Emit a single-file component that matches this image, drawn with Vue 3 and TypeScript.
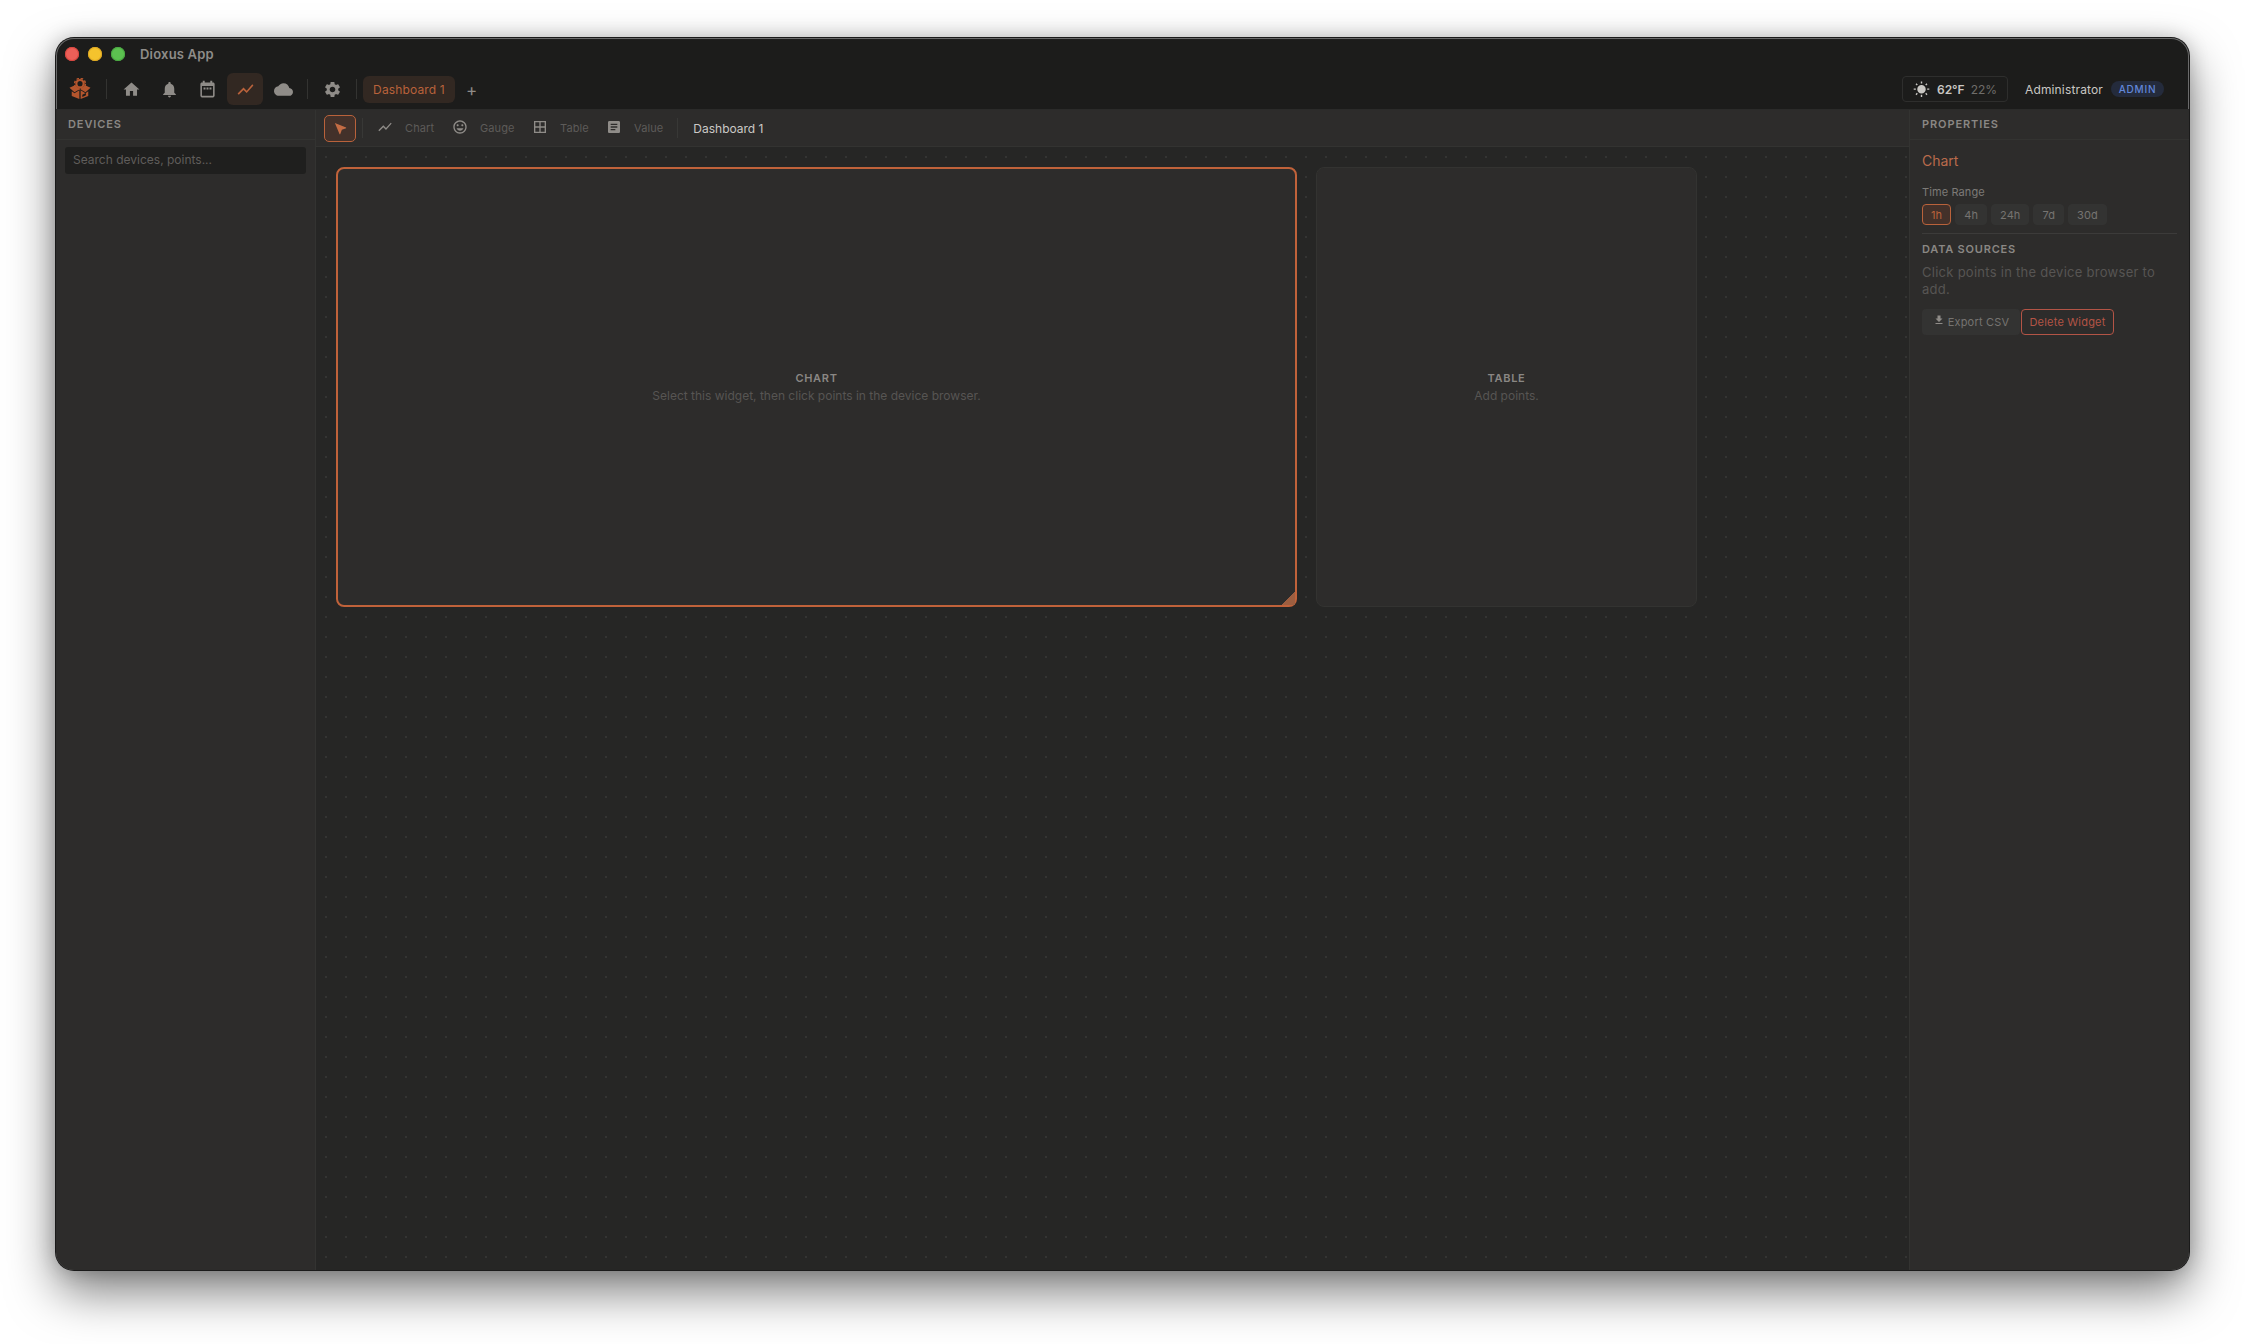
<script setup lang="ts">
const ranges = ['1h', '4h', '24h', '7d', '30d']
const icons = {
  home: 'M10 20v-6h4v6h5v-8h3L12 3 2 12h3v8z',
  bell: 'M12 22c1.1 0 2-.9 2-2h-4c0 1.1.89 2 2 2zm6-6v-5c0-3.07-1.64-5.64-4.5-6.32V4c0-.83-.67-1.5-1.5-1.5s-1.5.67-1.5 1.5v.68C7.63 5.36 6 7.92 6 11v5l-2 2v1h16v-1l-2-2z',
  calendar: 'M6 1h2.500v2h7V1H18v2h1c1.100 0 2 .9 2 2v15c0 1.100-.9 2-2 2H5c-1.100 0-2-.9-2-2V5c0-1.100.9-2 2-2h1zM5 7.500V20h14V7.500zM7 9.500h2.500V12H7zM10.750 9.500h2.500V12h-2.500zM14.500 9.500H17V12h-2.500z',
  chart: 'M3.5 18.49l6-6.01 4 4L22 6.92l-1.41-1.41-7.09 7.97-4-4L2 16.99z',
  cloud: 'M19.35 10.04C18.67 6.59 15.64 4 12 4 9.11 4 6.6 5.64 5.35 8.04 2.34 8.36 0 10.91 0 14c0 3.31 2.69 6 6 6h13c2.76 0 5-2.24 5-5 0-2.64-2.05-4.78-4.65-4.96z',
  settings: 'M19.14 12.94c.04-.3.06-.61.06-.94 0-.32-.02-.64-.07-.94l2.03-1.58c.18-.14.23-.41.12-.61l-1.92-3.32c-.12-.22-.37-.29-.59-.22l-2.39.96c-.5-.38-1.03-.7-1.62-.94l-.36-2.54c-.04-.24-.24-.41-.48-.41h-3.84c-.24 0-.43.17-.47.41l-.36 2.54c-.59.24-1.13.57-1.62.94l-2.39-.96c-.22-.08-.47 0-.59.22L2.74 8.87c-.12.21-.08.47.12.61l2.03 1.58c-.05.3-.09.63-.09.94s.02.64.07.94l-2.03 1.58c-.18.14-.23.41-.12.61l1.92 3.32c.12.22.37.29.59.22l2.39-.96c.5.38 1.03.7 1.62.94l.36 2.54c.05.24.24.41.48.41h3.84c.24 0 .44-.17.47-.41l.36-2.54c.59-.24 1.13-.56 1.62-.94l2.39.96c.22.08.47 0 .59-.22l1.92-3.32c.12-.22.07-.47-.12-.61l-2.01-1.58zM12 15.6c-1.98 0-3.6-1.62-3.6-3.6s1.62-3.6 3.6-3.6 3.6 1.62 3.6 3.6-1.62 3.6-3.6 3.6z',
  pointer: 'M3 3l18 7.530v.98l-6.840 2.650L11.520 21h-.98L3 3z',
  mood: 'M11.99 2C6.47 2 2 6.48 2 12s4.47 10 9.99 10C17.52 22 22 17.52 22 12S17.52 2 11.99 2zM12 20c-4.42 0-8-3.58-8-8s3.58-8 8-8 8 3.58 8 8-3.58 8-8 8zm3.5-9c.83 0 1.5-.67 1.5-1.5S16.33 8 15.5 8 14 8.67 14 9.5s.67 1.5 1.5 1.5zm-7 0c.83 0 1.5-.67 1.5-1.5S9.33 8 8.5 8 7 8.67 7 9.5 7.67 11 8.5 11zm3.5 6.5c2.33 0 4.31-1.46 5.11-3.5H6.89c.8 2.04 2.78 3.5 5.11 3.5z',
  table: 'M3 3v18h18V3H3zm8 16H5v-6h6v6zm0-8H5V5h6v6zm8 8h-6v-6h6v6zm0-8h-6V5h6v6z',
  article: 'M19 3H5c-1.1 0-2 .9-2 2v14c0 1.1.9 2 2 2h14c1.1 0 2-.9 2-2V5c0-1.1-.9-2-2-2zm-5 14H7v-2h7v2zm3-4H7v-2h10v2zm0-4H7V7h10v2z',
  download: 'M19 9h-4V3H9v6H5l7 7 7-7zM5 18v2h14v-2H5z',
  sun: 'M6.76 4.84l-1.8-1.79-1.41 1.41 1.79 1.79 1.42-1.41zM4 10.5H1v2h3v-2zm9-9.95h-2V3.5h2V.55zm7.45 3.91l-1.41-1.41-1.79 1.79 1.41 1.41 1.79-1.79zm-3.21 13.7l1.79 1.8 1.41-1.41-1.8-1.79-1.4 1.4zM20 10.5v2h3v-2h-3zm-8-5c-3.31 0-6 2.69-6 6s2.69 6 6 6 6-2.69 6-6-2.69-6-6-6zm-1 16.95h2V19.5h-2v2.95zm-7.45-3.91l1.41 1.41 1.79-1.8-1.41-1.41-1.79 1.8z',
}
const navItems = [
  { icon: icons.home, active: false },
  { icon: icons.bell, active: false },
  { icon: icons.calendar, active: false },
  { icon: icons.chart, active: true },
  { icon: icons.cloud, active: false },
]
const tools = [
  { icon: icons.chart, label: 'Chart', w: 75 },
  { icon: icons.mood, label: 'Gauge', w: 80 },
  { icon: icons.table, label: 'Table', w: 74 },
  { icon: icons.article, label: 'Value', w: 0 },
]
</script>

<template>
  <div class="page">
    <div class="window">
      <header class="titlebar">
        <span class="light red"></span>
        <span class="light yellow"></span>
        <span class="light green"></span>
        <span class="app-title">Dioxus App</span>
      </header>

      <nav class="topbar">
        <svg class="logo" viewBox="0 0 24 24" width="22" height="22">
          <circle cx="12" cy="6.200" r="4" fill="none" stroke="#b4552d" stroke-width="2.400" />
          <circle cx="12" cy="6.200" r="5.900" fill="none" stroke="#b4552d" stroke-width="1.600" stroke-dasharray="2.800 1.830" />
          <path fill="#b4552d" d="M.5 10.500L6.500 8l5.500 4-6 3.500zM23.500 10.500L17.500 8 12 12l6 3.500z" />
          <path fill="#b4552d" d="M3 14.500l3 2 5.300-3.200V23L3 19.500zM21 14.500l-3 2-5.300-3.200V23L21 19.500z" />
          <path fill="#1c1c1b" d="M14.500 18.200l4-1.800v2.400l-4 1.800z" />
        </svg>
        <span class="divider first"></span>
        <div class="nav-group">
          <button v-for="(item, i) in navItems" :key="i" class="nav-btn" :class="{ active: item.active }">
            <svg viewBox="0 0 24 24" width="19" height="19"><path fill-rule="evenodd" :d="item.icon" /></svg>
          </button>
        </div>
        <span class="divider second"></span>
        <button class="nav-btn settings">
          <svg viewBox="0 0 24 24" width="19" height="19"><path :d="icons.settings" /></svg>
        </button>
        <span class="divider third"></span>
        <div class="tab">Dashboard 1</div>
        <span class="plus">+</span>

        <div class="top-right">
          <div class="weather">
            <svg viewBox="0 0 24 24" width="17" height="17"><path :d="icons.sun" /></svg>
            <strong>62°F</strong>
            <span>22%</span>
          </div>
          <span class="user">Administrator</span>
          <span class="badge">ADMIN</span>
        </div>
      </nav>

      <div class="body">
        <aside class="sidebar">
          <div class="panel-title">DEVICES</div>
          <div class="search-wrap">
            <div class="search">Search devices, points...</div>
          </div>
        </aside>

        <main class="main">
          <div class="canvas-bar">
            <button class="select-btn">
              <svg viewBox="0 0 24 24" width="15" height="15"><path :d="icons.pointer" /></svg>
            </button>
            <span class="bar-divider"></span>
            <div class="tools">
              <div v-for="tool in tools" :key="tool.label" class="tool" :style="tool.w ? { width: tool.w + 'px' } : undefined">
                <svg viewBox="0 0 24 24" width="15" height="15"><path :d="tool.icon" /></svg>
                <span>{{ tool.label }}</span>
              </div>
            </div>
            <span class="bar-divider end"></span>
            <span class="dash-name">Dashboard 1</span>
          </div>

          <section class="canvas">
            <div class="widget selected">
              <b>CHART</b>
              <small>Select this widget, then click points in the device browser.</small>
              <i class="handle"></i>
            </div>
            <div class="widget second-widget">
              <b>TABLE</b>
              <small>Add points.</small>
            </div>
          </section>
        </main>

        <aside class="props">
          <div class="panel-title">PROPERTIES</div>
          <div class="props-body">
            <h2>Chart</h2>
            <label>Time Range</label>
            <div class="chips">
              <button v-for="(r, i) in ranges" :key="r" class="chip" :class="{ on: i === 0 }">{{ r }}</button>
            </div>
            <hr />
            <h3>DATA SOURCES</h3>
            <p>Click points in the device browser to add.</p>
            <div class="actions">
              <button class="export">
                <svg viewBox="0 0 24 24" width="12" height="12"><path :d="icons.download" /></svg>
                Export CSV
              </button>
              <button class="delete">Delete Widget</button>
            </div>
          </div>
        </aside>
      </div>
    </div>
  </div>
</template>

<style>
html, body { margin: 0; background: #fff; }
</style>

<style scoped>
* { box-sizing: border-box; }
.page {
  width: 2245px;
  height: 1344px;
  padding: 38px 0 0 56px;
  overflow: hidden;
  background: #fff;
  font-family: Inter, "Noto Sans", sans-serif;
}
.window {
  width: 2133px;
  height: 1232px;
  display: flex;
  flex-direction: column;
  border-radius: 18px;
  overflow: hidden;
  background: #1c1c1b;
  box-shadow: 0 0 0 1px #1a1a1a, inset 0 0 0 1px #6a6a6a, 0 22px 48px rgba(0, 0, 0, .5), 0 0 20px rgba(0, 0, 0, .22);
}
.titlebar {
  height: 32px;
  flex: none;
  display: flex;
  align-items: center;
  padding: 0 0 0 9px;
}
.light { width: 14px; height: 14px; border-radius: 50%; margin-right: 9px; }
.red { background: #ec5f58; box-shadow: inset 0 0 0 1px #d8463f; }
.yellow { background: #f5c32d; box-shadow: inset 0 0 0 1px #dfa823; }
.green { background: #5cc150; box-shadow: inset 0 0 0 1px #4aa842; }
.app-title { margin-left: 6px; color: #8e8c89; font-size: 13px; font-weight: 600; letter-spacing: .2px; }

.topbar {
  height: 40px;
  flex: none;
  display: flex;
  align-items: center;
  padding: 0 0 1px 14px;
  border-bottom: 1px solid #2b2b2a;
}
.logo { flex: none; margin-left: -1px; }
.divider { width: 1px; height: 20px; background: #333331; flex: none; }
.divider.first { margin: 0 6px 0 15px; }
.divider.second { margin: 0 6px 0 6px; }
.divider.third { margin: 0 6px 0 6px; }
.nav-group { display: flex; gap: 2px; }
.nav-btn {
  width: 36px;
  height: 32px;
  border: 0;
  border-radius: 6px;
  background: transparent;
  display: flex;
  align-items: center;
  justify-content: center;
  padding: 0;
  flex: none;
}
.nav-btn svg { fill: #8f8c88; }
.nav-btn.active { background: #322822; }
.nav-btn.active svg { fill: #b9623b; }
.nav-btn.settings { width: 36px; }
.tab {
  width: 92px;
  height: 27px;
  border-radius: 6px;
  background: #322822;
  color: #b9623b;
  font-size: 12px;
  line-height: 27px;
  text-align: center;
  letter-spacing: .15px;
}
.plus { margin-left: 11px; color: #8f8c88; font-size: 17px; line-height: 1; padding-top: 3px; }
.top-right { margin-left: auto; display: flex; align-items: center; padding-right: 25px; }
.weather {
  width: 106px;
  height: 26px;
  display: flex;
  align-items: center;
  padding-left: 10px;
  border: 1px solid #2e2e2d;
  border-radius: 4px;
  font-size: 12px;
}
.weather svg { fill: #c9c7c3; margin-right: 7px; }
.weather strong { color: #c9c7c3; font-weight: 600; margin-right: 6px; }
.weather span { color: #6f6d6a; }
.user { margin-left: 17px; color: #c9c7c3; font-size: 12px; font-weight: 400; letter-spacing: .15px; }
.badge {
  margin-left: 8px;
  padding: 0 2px;
  width: 53px;
  height: 16px;
  border-radius: 8px;
  background: #242b3c;
  color: #6287da;
  font-size: 10px;
  font-weight: 500;
  letter-spacing: .8px;
  line-height: 16px;
  text-align: center;
}

.body { flex: 1; min-height: 0; display: flex; }
.sidebar { width: 260px; flex: none; background: #2d2c2b; border-right: 1px solid #333331; }
.panel-title {
  height: 30px;
  padding-left: 12px;
  border-bottom: 1px solid #333331;
  color: #8a8784;
  font-size: 11px;
  font-weight: 600;
  letter-spacing: .9px;
  line-height: 29px;
}
.search-wrap { padding: 7px 9px 0 9px; }
.search {
  height: 27px;
  padding-left: 8px;
  border-radius: 3px;
  background: #1f1f1e;
  color: #5f5d5b;
  font-size: 12px;
  line-height: 26px;
}
.main { flex: 1; min-width: 0; display: flex; flex-direction: column; background: #262625; }
.canvas-bar {
  height: 37px;
  flex: none;
  display: flex;
  align-items: center;
  padding: 0 0 0 8px;
  background: #2d2c2b;
  border-bottom: 1px solid #333331;
}
.select-btn {
  width: 32px;
  height: 27px;
  border: 1px solid #b9623b;
  border-radius: 5px;
  background: #43312a;
  display: flex;
  align-items: center;
  justify-content: center;
  padding: 0;
}
.select-btn svg { fill: #c46c44; }
.bar-divider { width: 1px; height: 20px; background: #383836; margin: 0 14px 0 6px; }
.bar-divider.end { margin: 0 15px 0 14px; }
.tools { display: flex; }
.tool { display: flex; align-items: center; gap: 12px; font-size: 11px; color: #5d5b59; letter-spacing: .1px; }
.tool svg { fill: #8f8c88; flex: none; width: 16px; height: 16px; margin-top: -2px; }
.dash-name { color: #cbc9c6; font-size: 12px; }

.canvas {
  flex: 1;
  display: flex;
  align-items: flex-start;
  gap: 19px;
  padding: 20px;
  background-color: #262625;
  background-image: radial-gradient(circle at 10px 10px, #343433 1px, transparent 1.400px);
  background-size: 20px 20px;
}
.widget {
  position: relative;
  height: 440px;
  display: flex;
  flex-direction: column;
  align-items: center;
  justify-content: center;
  border: 1px solid #333331;
  border-radius: 8px;
  background: #2d2c2b;
  padding-bottom: 1px;
}
.selected { width: 961px; border: 2px solid #c0623a; }
.second-widget { width: 381px; }
.widget b {
  color: #8a8784;
  font-size: 11px;
  font-weight: 600;
  letter-spacing: .7px;
  line-height: 17px;
}
.widget small { color: #575553; font-size: 12px; line-height: 17px; }
.handle {
  position: absolute;
  right: 0;
  bottom: 0;
  width: 14px;
  height: 14px;
  background: linear-gradient(135deg, transparent 50%, #9c5e40 50%);
}

.props { width: 280px; flex: none; background: #2d2c2b; border-left: 1px solid #333331; }
.props .panel-title { padding-left: 12px; }
.props-body { padding: 12px 12px 0; }
h2 { margin: 0; color: #b96b4c; font-size: 14px; font-weight: 400; line-height: 17px; }
label { display: block; margin-top: 16px; color: #7c7a77; font-size: 11px; line-height: 14px; letter-spacing: .1px; }
.chips { display: flex; gap: 4px; margin-top: 5px; }
.chip {
  height: 21px;
  padding: 0 8px;
  border: 1px solid #333332;
  border-radius: 4px;
  background: #333332;
  color: #767471;
  font: 400 11px Inter, sans-serif;
  letter-spacing: .1px;
}
.chip.on { border-color: #b9623b; background: #43312a; color: #b9623b; }
hr { margin: 8px 0 0; width: 255px; border: 0; border-top: 1px solid #3c3b3a; }
h3 { margin: 8px 0 0; color: #8a8784; font-size: 11px; font-weight: 600; letter-spacing: .8px; line-height: 14px; }
p { margin: 8px 0 0; width: 250px; color: #575553; font-size: 13px; line-height: 17px; letter-spacing: .27px; }
.actions { display: flex; gap: 1px; margin-top: 11px; }
.actions button { height: 26px; border-radius: 4px; font: 400 11px Inter, sans-serif; padding: 0; letter-spacing: .2px; }
.export {
  width: 98px;
  border: 0;
  background: #333332;
  color: #767471;
  display: flex;
  align-items: center;
  justify-content: center;
  gap: 3px;
}
.export svg { fill: #8f8c88; margin-top: -5px; }
.delete { width: 93px; border: 1px solid #b35446; background: transparent; color: #b35446; }
</style>
